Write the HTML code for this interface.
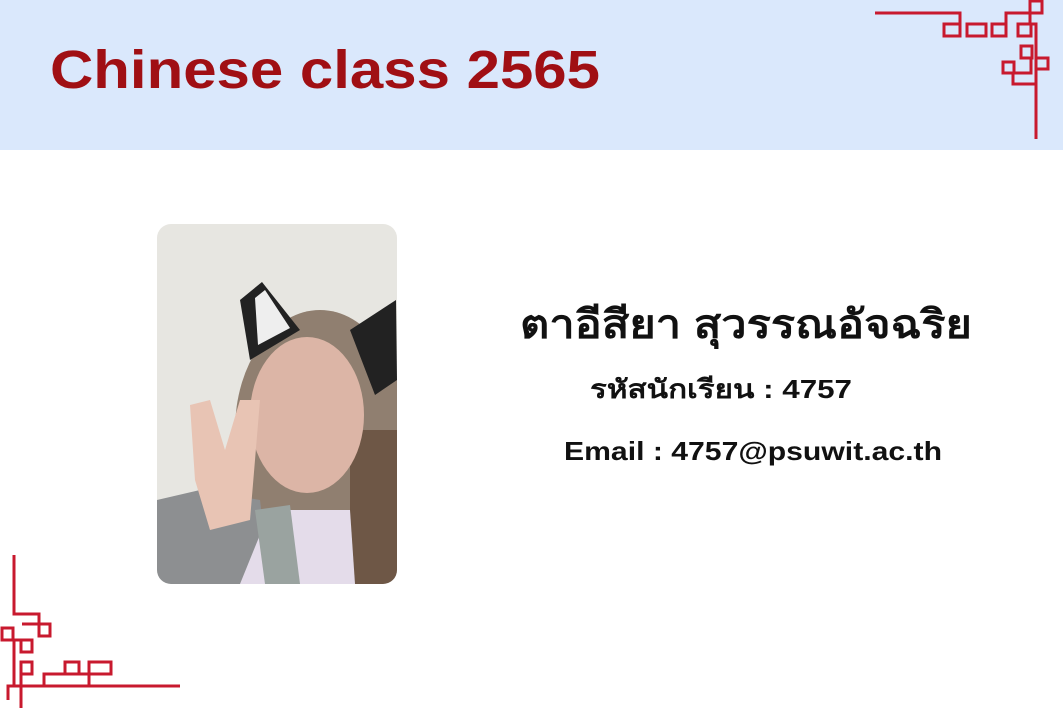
<!DOCTYPE html>
<html><head><meta charset="utf-8"><style>
html,body{margin:0;padding:0;width:1063px;height:708px;overflow:hidden;background:#fff;font-family:"Liberation Sans",sans-serif}
</style></head><body>
<svg width="1063" height="708" viewBox="0 0 1063 708" xmlns="http://www.w3.org/2000/svg">
<rect x="0" y="0" width="1063" height="150" fill="#dae8fc"/>
<text x="50" y="88" font-family="Liberation Sans, sans-serif" font-weight="bold" font-size="54" fill="#a00f14" textLength="550" lengthAdjust="spacingAndGlyphs">Chinese class 2565</text>
<g fill="none" stroke="#c8192e" stroke-width="3">
<polyline points="875,13 960,13 960,36"/>
<rect x="944" y="24" width="16" height="12"/>
<rect x="967" y="24" width="19" height="12"/>
<rect x="992" y="24" width="14" height="12"/>
<polyline points="1006,24 1006,13 1030,13"/>
<rect x="1018" y="24" width="13" height="12"/>
<rect x="1030" y="1" width="12" height="12"/>
<polyline points="1030,13 1030,24 1036,24 1036,139"/>
<rect x="1021" y="46" width="11" height="12"/>
<rect x="1036" y="58" width="12" height="11"/>
<rect x="1003" y="62" width="11" height="11"/>
<polyline points="1014,73 1031,73 1031,58"/>
<polyline points="1013,73 1013,84 1036,84"/>
<polyline points="14,555 14,614 39,614 39,623"/>
<rect x="39" y="624" width="11" height="12"/>
<polyline points="22,624 39,624"/>
<rect x="2" y="628" width="11" height="12"/>
<polyline points="13,640 21,640 21,652 32,652 32,640 14,640 14,686"/>
<rect x="21" y="662" width="11" height="12"/>
<rect x="65" y="662" width="14" height="12"/>
<rect x="89" y="662" width="22" height="12"/>
<polyline points="8,700 8,686 180,686"/>
<polyline points="21,674 21,708"/>
<polyline points="44,686 44,674 65,674"/>
<polyline points="79,674 89,674 89,686"/>
</g>
<defs><clipPath id="c"><rect x="157" y="224" width="240" height="360" rx="14"/></clipPath>
<radialGradient id="hair" cx="0.5" cy="0.5" r="0.5"><stop offset="0.6" stop-color="#8a7766"/><stop offset="1" stop-color="#8a7766" stop-opacity="0"/></radialGradient></defs>
<g clip-path="url(#c)">
<rect x="157" y="224" width="240" height="360" fill="#e7e6e1"/>
<ellipse cx="320" cy="430" rx="85" ry="120" fill="#7a6554" opacity="0.8"/>
<rect x="350" y="430" width="47" height="154" fill="#6e5746"/>
<path d="M240,300 L262,282 L300,330 L250,360 Z" fill="#222"/>
<path d="M350,330 L396,300 L397,380 L375,395 Z" fill="#222"/>
<path d="M255,298 L265,290 L290,328 L258,345 Z" fill="#eee"/>
<ellipse cx="307" cy="415" rx="57" ry="78" fill="#dcb5a6"/>
<path d="M157,500 L200,490 L260,500 L270,584 L157,584 Z" fill="#8d8f91"/>
<path d="M270,510 L350,510 L355,584 L240,584 Z" fill="#e4dcea"/>
<path d="M255,510 L290,505 L300,584 L265,584 Z" fill="#9aa3a0"/>
<path d="M190,405 L210,400 L225,450 L240,400 L260,400 L250,520 L210,530 L195,480 Z" fill="#e8c4b4"/>
</g>
<g font-family="Liberation Sans, sans-serif" fill="#111" font-weight="bold">
<text x="520" y="338" font-size="40" textLength="452" lengthAdjust="spacingAndGlyphs">ตาอีสียา สุวรรณอัจฉริย</text>
<text x="590" y="398" font-size="26" textLength="262" lengthAdjust="spacingAndGlyphs">รหัสนักเรียน : 4757</text>
<text x="564" y="460" font-size="26" textLength="378" lengthAdjust="spacingAndGlyphs">Email  : 4757@psuwit.ac.th</text>
</g>
</svg>
</body></html>
